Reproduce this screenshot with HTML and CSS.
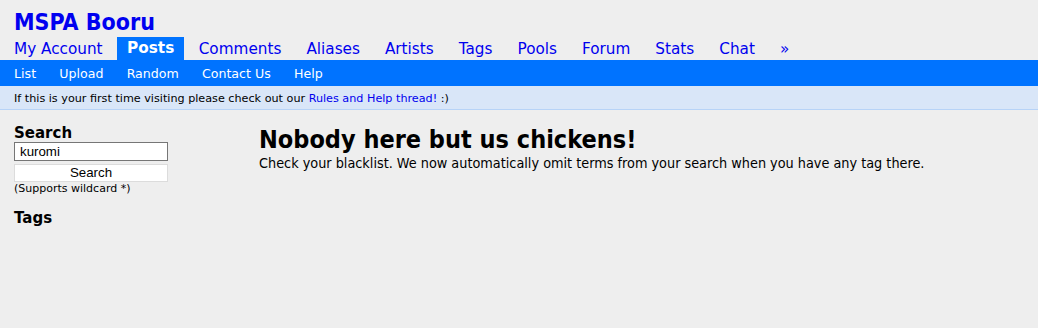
FILE: index.html
```html
<!DOCTYPE html>
<html>
<head>
<meta charset="utf-8">
<link rel="stylesheet" href="styles.css">
</head>
<body>
<div class="header">
  <h2 class="site-title"><a href="#">MSPA Booru</a></h2>
  <ul class="nav">
    <li><a href="#">My Account</a></li>
    <li class="current"><a href="#">Posts</a></li>
    <li><a href="#">Comments</a></li>
    <li><a href="#">Aliases</a></li>
    <li><a href="#">Artists</a></li>
    <li><a href="#">Tags</a></li>
    <li><a href="#">Pools</a></li>
    <li><a href="#">Forum</a></li>
    <li><a href="#">Stats</a></li>
    <li><a href="#">Chat</a></li>
    <li><a href="#">»</a></li>
  </ul>
  <ul class="subnav">
    <li><a href="#">List</a></li>
    <li><a href="#">Upload</a></li>
    <li><a href="#">Random</a></li>
    <li><a href="#">Contact Us</a></li>
    <li><a href="#">Help</a></li>
  </ul>
</div>
<div class="notice">If this is your first time visiting please check out our <a href="#">Rules and Help thread!</a> :)</div>
<div class="content">
  <div class="sidebar">
    <h5>Search</h5>
    <form class="search">
      <input class="search-input" type="text" value="kuromi">
      <button class="search-btn" type="button">Search</button>
    </form>
    <div class="hint">(Supports wildcard *)</div>
    <h5 class="tags-title">Tags</h5>
  </div>
  <div class="main">
    <h1>Nobody here but us chickens!</h1>
    <p>Check your blacklist. We now automatically omit terms from your search when you have any tag there.</p>
  </div>
</div>
</body>
</html>
```
FILE: styles.css
```css
html, body {
  margin: 0;
  padding: 0;
  background: #eeeeee;
  font-family: "DejaVu Sans", Verdana, sans-serif;
  color: #000;
}
a { color: #0000ee; text-decoration: none; }

.header { padding-top: 8px; }
.site-title {
  margin: 0 0 0 14px;
  font-family: "DejaVu Sans Condensed", "DejaVu Sans", sans-serif;
  font-stretch: condensed;
  font-size: 23px;
  line-height: 28px;
  font-weight: bold;
}
.site-title a { color: #0000f0; }
.nav {
  list-style: none;
  margin: 1px 0 0 3.5px;
  padding: 0;
  display: flex;
  height: 23px;
}
.nav li a {
  display: block;
  padding: 0 10.5px;
  margin-right: 4px;
  font-size: 15.25px;
  line-height: 24px;
}
.nav li.current a {
  background: #0073ff;
  color: #fff;
  font-weight: bold;
  line-height: 23px;
  padding: 0 10px;
}
.subnav {
  list-style: none;
  margin: 0;
  padding: 0 0 0 2.5px;
  display: flex;
  background: #0073ff;
  height: 26px;
}
.subnav li a {
  display: block;
  color: #fff;
  font-size: 12.6px;
  line-height: 28px;
  padding: 0 11.6px;
}
.notice {
  background: #d9e6f8;
  border-bottom: 1px solid #b7d3f7;
  font-size: 11.2px;
  line-height: 26px;
  height: 23px;
  padding: 0 14px;
}
.notice a { color: #0000ee; }
.content {
  display: flex;
  padding: 14px 14px 0 14px;
}
.sidebar { width: 245px; }
.sidebar h5 {
  margin: 0;
  font-size: 15px;
  line-height: 18px;
  font-weight: bold;
}
.search { display: flex; flex-direction: column; }
.search-input {
  box-sizing: border-box;
  width: 154px;
  height: 19px;
  margin: 0;
  border: 1px solid #767676;
  padding: 0 5px;
  font-family: "Liberation Sans", Arial, sans-serif;
  font-size: 13.3px;
  background: #fff;
}
.search-btn {
  box-sizing: border-box;
  width: 154px;
  height: 18px;
  margin: 3px 0 0 0;
  padding: 0;
  border: 1px solid #dcdcdc;
  background: #fff;
  font-family: "Liberation Sans", Arial, sans-serif;
  font-size: 13.3px;
  line-height: 16px;
  color: #000;
}
.hint {
  font-size: 11px;
  line-height: 13px;
}
.tags-title { margin-top: 14px !important; }
.main { padding-top: 1px; }
.main h1 {
  margin: 0;
  font-family: "DejaVu Sans Condensed", "DejaVu Sans", sans-serif;
  font-stretch: condensed;
  font-size: 25px;
  line-height: 30px;
  font-weight: bold;
}
.main p {
  margin: 0;
  font-family: "DejaVu Sans Condensed", "DejaVu Sans", sans-serif;
  font-stretch: condensed;
  font-size: 14.3px;
  line-height: 17px;
}
```
